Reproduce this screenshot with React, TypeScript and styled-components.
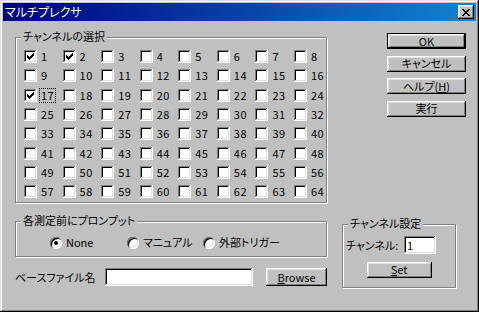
import React from "react";
import styled, { createGlobalStyle, css } from "styled-components";

const FONT = `"Noto Sans CJK JP", "Noto Sans", sans-serif`;

const Global = createGlobalStyle`
  html, body { margin: 0; padding: 0; background: #c0c0c0; }
  body { font-family: ${FONT}; font-size: 11px; color: #000; }
  * { box-sizing: border-box; }
`;

const raised = css`
  background: #c0c0c0;
  border: none;
  box-shadow: inset -1px -1px #000, inset 1px 1px #fff, inset -2px -2px #808080,
    inset 2px 2px #dfdfdf;
`;

const sunken = css`
  background: #fff;
  box-shadow: inset -1px -1px #fff, inset 1px 1px #808080, inset -2px -2px #dfdfdf,
    inset 2px 2px #000;
`;

const Window = styled.div`
  width: 479px;
  height: 312px;
  padding: 3px;
  background: #c0c0c0;
  box-shadow: inset -1px -1px #000, inset 1px 1px #dfdfdf, inset -2px -2px #808080,
    inset 2px 2px #fff;
  display: flex;
  flex-direction: column;
  font-family: ${FONT};
  font-size: 11px;
  font-feature-settings: "palt";
`;

const TitleBar = styled.div`
  height: 18px;
  background: linear-gradient(90deg, #000080, #1084d0);
  display: flex;
  align-items: center;
  justify-content: space-between;
  padding: 0 2px 0 2px;
`;

const TitleText = styled.span`
  color: #fff;
  font-size: 12px;
  line-height: 18px;
`;

const CloseButton = styled.div`
  ${raised};
  width: 16px;
  height: 14px;
  display: flex;
  align-items: center;
  justify-content: center;
  padding-right: 1px;
`;

const Body = styled.div`
  display: flex;
  gap: 15px;
  padding: 12px 0 0 12px;
  flex: 1;
`;

const LeftCol = styled.div`
  width: 312px;
  padding-top: 4px;
  display: flex;
  flex-direction: column;
`;

const RightCol = styled.div`
  width: 124px;
  display: flex;
  flex-direction: column;
`;

const Group = styled.div<{ $w?: number; $h: number; $mt?: number }>`
  position: relative;
  width: ${(p) => (p.$w ? `${p.$w}px` : "100%")};
  height: ${(p) => p.$h}px;
  margin-top: ${(p) => p.$mt ?? 0}px;
  border: 1px solid #808080;
  box-shadow: inset 1px 1px #fff, 1px 1px #fff;
`;

const Legend = styled.span`
  position: absolute;
  top: -8px;
  left: 5px;
  padding: 0 2px;
  background: #c0c0c0;
  line-height: 13px;
  white-space: nowrap;
`;

const ChannelGrid = styled.div`
  display: grid;
  grid-template-columns: repeat(8, 38.57px);
  grid-auto-rows: 19.29px;
  padding: 9px 0 0 8px;
`;

const Cell = styled.div`
  display: flex;
  align-items: center;
`;

const CheckBox = styled.span`
  ${sunken};
  width: 13px;
  height: 13px;
  flex: none;
  display: flex;
  align-items: center;
  justify-content: center;
`;

const CellLabel = styled.span<{ $focused?: boolean }>`
  line-height: 13px;
  margin-left: ${(p) => (p.$focused ? 3 : 4)}px;
  padding: 0 ${(p) => (p.$focused ? 1 : 0)}px;
  outline: ${(p) => (p.$focused ? "1px dotted #000" : "none")};
  letter-spacing: 0.5px;
`;

const RadioRow = styled.div`
  display: grid;
  grid-template-columns: 77px 76px auto;
  padding: 14px 0 0 34px;
`;

const RadioOption = styled.div`
  display: flex;
  align-items: center;
  height: 13px;
`;

const RadioCircle = styled.span<{ $checked?: boolean }>`
  width: 12px;
  height: 12px;
  flex: none;
  border-radius: 50%;
  background: #fff;
  box-shadow: inset 1px 1px #808080, inset -1px -1px #fff, inset 2px 2px #000,
    inset -2px -2px #dfdfdf;
  display: flex;
  align-items: center;
  justify-content: center;
  &::after {
    content: "";
    width: 4px;
    height: 4px;
    border-radius: 50%;
    background: ${(p) => (p.$checked ? "#000" : "transparent")};
  }
`;

const RadioLabel = styled.span`
  margin-left: 4px;
  line-height: 13px;
  white-space: nowrap;
`;

const FileRow = styled.div`
  display: flex;
  align-items: center;
  margin-top: 11px;
  height: 18px;
`;

const FieldLabel = styled.span<{ $w: number }>`
  width: ${(p) => p.$w}px;
  flex: none;
  white-space: nowrap;
`;

const TextInput = styled.div<{ $w: number; $h: number }>`
  ${sunken};
  width: ${(p) => p.$w}px;
  height: ${(p) => p.$h}px;
  padding: 0 3px;
  line-height: ${(p) => p.$h}px;
`;

const Button = styled.div<{ $w: number; $h?: number; $default?: boolean; $ml?: number }>`
  ${raised};
  width: ${(p) => p.$w}px;
  height: ${(p) => p.$h ?? 16}px;
  margin-left: ${(p) => p.$ml ?? 0}px;
  display: flex;
  align-items: center;
  justify-content: center;
  line-height: 1;
  white-space: nowrap;
  ${(p) =>
    p.$default &&
    css`
      box-shadow: inset 0 0 0 1px #000, inset -2px -2px #000, inset 2px 2px #fff,
        inset -3px -3px #808080, inset 3px 3px #dfdfdf;
    `}
`;

const ButtonStack = styled.div`
  display: flex;
  flex-direction: column;
  align-items: flex-end;
  gap: 6.67px;
`;

const ChannelRow = styled.div`
  display: flex;
  align-items: center;
  padding: 11px 0 0 3px;
`;

const SetRow = styled.div`
  display: flex;
  justify-content: center;
  margin-top: 8px;
`;

const Accel = styled.span`
  text-decoration: underline;
  text-underline-offset: 1px;
`;

const CheckMark = () => (
  <svg width="7" height="7" viewBox="0 0 7 7" shapeRendering="crispEdges">
    <path
      d="M0 2h1v1h1v1h1v-1h1v-1h1v-1h1v-1h1v3h-1v1h-1v1h-1v1h-1v1h-1v-1h-1v-1h-1z"
      fill="#000"
    />
  </svg>
);

const CloseGlyph = () => (
  <svg width="8" height="7" viewBox="0 0 8 7" shapeRendering="crispEdges">
    <path
      d="M0 0h2v1h1v1h2v-1h1v-1h2v1h-1v1h-1v1h-1v1h1v1h1v1h1v1h-2v-1h-1v-1h-2v1h-1v1h-2v-1h1v-1h1v-1h1v-1h-1v-1h-1v-1h-1z"
      fill="#000"
    />
  </svg>
);

const checked = new Set([1, 2, 17]);
const channels = Array.from({ length: 64 }, (_, i) => i + 1);

export default function App() {
  return (
    <>
      <Global />
      <Window>
        <TitleBar>
          <TitleText>マルチプレクサ</TitleText>
          <CloseButton>
            <CloseGlyph />
          </CloseButton>
        </TitleBar>
        <Body>
          <LeftCol>
            <Group $h={166}>
              <Legend>チャンネルの選択</Legend>
              <ChannelGrid>
                {channels.map((n) => (
                  <Cell key={n}>
                    <CheckBox>{checked.has(n) && <CheckMark />}</CheckBox>
                    <CellLabel $focused={n === 17}>{n}</CellLabel>
                  </Cell>
                ))}
              </ChannelGrid>
            </Group>
            <Group $h={36} $mt={18}>
              <Legend>各測定前にプロンプット</Legend>
              <RadioRow>
                <RadioOption>
                  <RadioCircle $checked />
                  <RadioLabel>None</RadioLabel>
                </RadioOption>
                <RadioOption>
                  <RadioCircle />
                  <RadioLabel>マニュアル</RadioLabel>
                </RadioOption>
                <RadioOption>
                  <RadioCircle />
                  <RadioLabel>外部トリガー</RadioLabel>
                </RadioOption>
              </RadioRow>
            </Group>
            <FileRow>
              <FieldLabel $w={90}>ベースファイル名</FieldLabel>
              <TextInput $w={148} $h={18} />
              <Button $w={61} $h={18} $ml={13}>
                <Accel>B</Accel>rowse
              </Button>
            </FileRow>
          </LeftCol>
          <RightCol>
            <ButtonStack>
              <Button $w={79} $default>
                OK
              </Button>
              <Button $w={79}>キャンセル</Button>
              <Button $w={79}>
                ヘルプ(<Accel>H</Accel>)
              </Button>
              <Button $w={79}>実行</Button>
            </ButtonStack>
            <Group $w={114} $h={64} $mt={107}>
              <Legend>チャンネル設定</Legend>
              <ChannelRow>
                <FieldLabel $w={58}>チャンネル:</FieldLabel>
                <TextInput $w={32} $h={18}>
                  1
                </TextInput>
              </ChannelRow>
              <SetRow>
                <Button $w={65}>
                  <Accel>S</Accel>et
                </Button>
              </SetRow>
            </Group>
          </RightCol>
        </Body>
      </Window>
    </>
  );
}
